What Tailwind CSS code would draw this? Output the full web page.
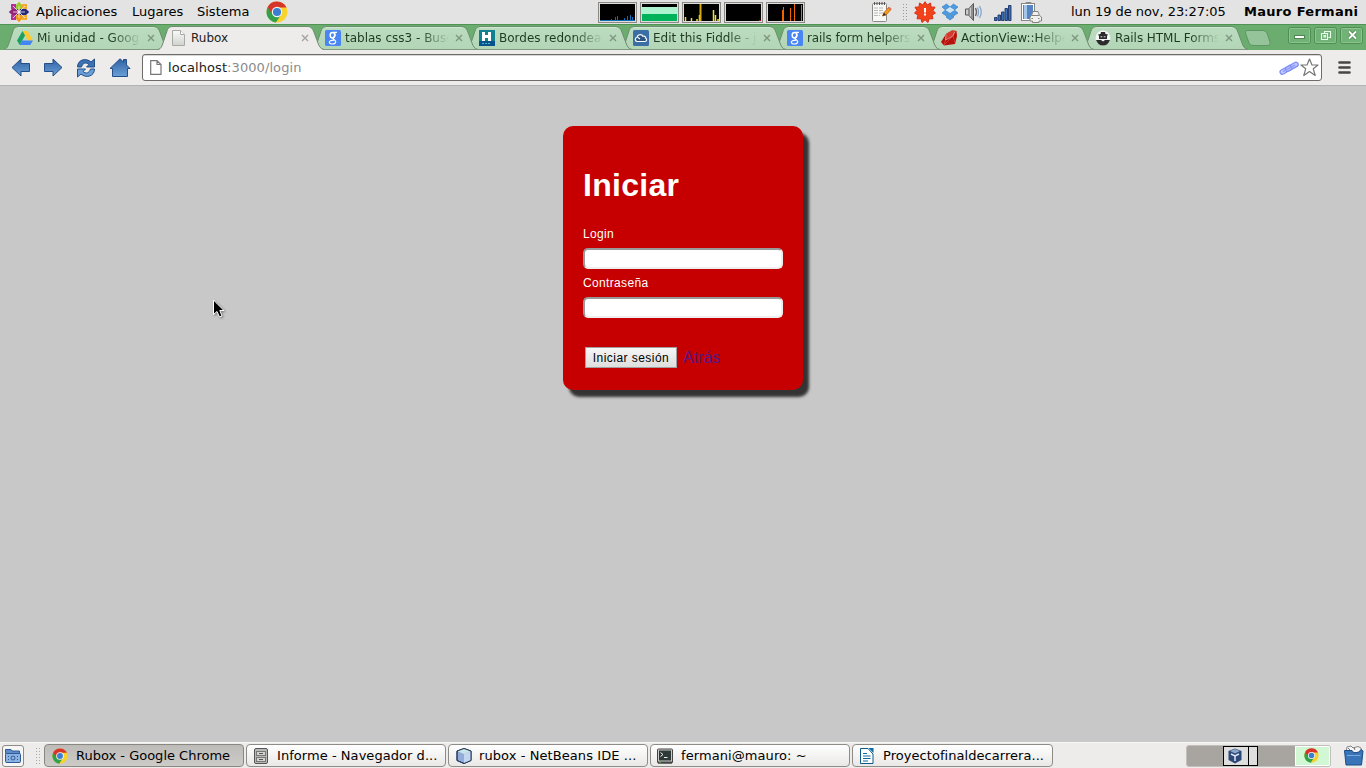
<!DOCTYPE html>
<html lang="es">
<head>
<meta charset="utf-8">
<title>Rubox</title>
<script src="https://cdn.jsdelivr.net/npm/@tailwindcss/browser@4"></script>
</head>
<body class="w-[1366px] h-[768px] overflow-hidden flex flex-col bg-[#c8c8c8] font-['DejaVu_Sans',sans-serif] text-black">
<svg class="absolute w-0 h-0">
  <defs>
    <linearGradient id="blue" x1="0" y1="0" x2="0" y2="1"><stop offset="0" stop-color="#2f62a3"/><stop offset="1" stop-color="#6b9fd8"/></linearGradient>
    <linearGradient id="tabg" x1="0" y1="0" x2="0" y2="1"><stop offset="0" stop-color="#bcdcbf"/><stop offset="1" stop-color="#b3d6b7"/></linearGradient>
    <linearGradient id="paper" x1="0" y1="0" x2="0" y2="1"><stop offset="0" stop-color="#fafaf8"/><stop offset="1" stop-color="#d0d3cd"/></linearGradient>
  </defs>
  <symbol id="tab" viewBox="0 0 166 25"><path d="M0 24.5C3 24 4 21 5 18L9 6C10 2.500 12 1.500 15 1.500H149C152 1.500 154 2.500 155.500 6L160 18C161 21 162.500 24 166 24.500Z" fill="url(#tabg)"/><path d="M0 24.500C3 24 4 21 5 18L9 6C10 2.500 12 1.500 15 1.500H149C152 1.500 154 2.500 155.500 6L160 18C161 21 162.500 24 166 24.500" fill="none" stroke="#6c8e6e"/><path d="M14 2.500H150" stroke="#cfe8d1"/><path d="M2 24.500H165" stroke="#7f9a81"/></symbol>
  <symbol id="x" viewBox="0 0 8 8"><path d="M1 1L7 7M7 1L1 7" stroke="currentColor" stroke-width="1.400"/></symbol>
  <symbol id="chrome" viewBox="0 0 20 20"><circle cx="10" cy="10" r="9.500" fill="#f8d32c"/><path d="M10 10L1.500 5.500A9.700 9.700 0 0 0 9 19.600L14 12Z" fill="#35a04a"/><path d="M10 10L5.500 12L1.500 5.400A9.700 9.700 0 0 1 18.700 6H10Z" fill="#d8352a"/><circle cx="10" cy="10" r="4.800" fill="#f4f4f0"/><circle cx="10" cy="10" r="3.700" fill="#3c7fd0"/></symbol>
  <symbol id="g" viewBox="0 0 16 16"><rect width="16" height="16" rx="1.500" fill="#4a86f3"/><ellipse cx="7.500" cy="5.300" rx="2.300" ry="2.700" fill="none" stroke="#fff" stroke-width="1.500"/><path d="M8 2.300H12M9.500 3C10.500 5 10 6.500 8.300 7.800C7 9 9 9.300 10 10.300C12 12.500 9.500 14 7.300 14C4 14 3.500 11.800 5.500 10.800C6.500 10.300 8 10.200 9 10.200" fill="none" stroke="#fff" stroke-width="1.200"/></symbol>
</svg>

<!-- GNOME top panel -->
<header class="h-6 shrink-0 flex items-center bg-[#e3e3e3] text-[13px] leading-[22px] pb-px">
  <svg class="ml-2 w-[22px] h-[22px] shrink-0" viewBox="0 0 22 22">
    <path d="M11 .8L14 4V10L11 11L8 10V4Z" fill="#9ccd2a"/><path d="M11 21.200L14 18V12L11 11L8 12V18Z" fill="#f09a1a"/><path d="M.8 11L4 8H10L11 11L10 14H4Z" fill="#932279"/><path d="M21.200 11L18 8H12L11 11L12 14H18Z" fill="#27277c"/>
    <path d="M3 3H8V8H3Z" fill="#b2309a"/><path d="M19 3V8H14V3Z" fill="#f5ac2e"/><path d="M3 19V14H8V19Z" fill="#b2309a"/><path d="M19 19H14V14H19Z" fill="#f5ac2e"/>
    <path d="M5 5L17 17M17 5L5 17M11 5V17M5 11H17" stroke="#eee" stroke-width=".8"/><circle cx="11" cy="11" r="1.500" fill="#eee"/>
  </svg>
  <span class="ml-1.5 w-24">Aplicaciones</span><span class="w-[65px]">Lugares</span><span class="w-[69px]">Sistema</span>
  <svg class="w-[22px] h-[22px] shrink-0 mt-px"><use href="#chrome"/></svg>
  <div class="ml-[310px] mt-px flex gap-[3px]">
    <svg class="w-[39px] h-[21px] border border-[#8c8884] bg-black" viewBox="0 0 37 19"><path d="M1 17.500H36M12.500 16V18M16.500 14V18M18.500 13V18M25.500 15V18M28.500 13V18M31.500 12V18M33.500 14V18" stroke="#0a6fb8"/><rect x=".5" y=".5" width="36" height="18" fill="none" stroke="#ddd"/></svg>
    <svg class="w-[39px] h-[21px] border border-[#8c8884] bg-black" viewBox="0 0 37 19"><path d="M1 4H36V11H1Z" fill="#aef3cf"/><path d="M1 11H36V18H1Z" fill="#00b25a"/><rect x=".5" y=".5" width="36" height="18" fill="none" stroke="#ddd"/></svg>
    <svg class="w-[39px] h-[21px] border border-[#8c8884] bg-black" viewBox="0 0 37 19"><path d="M2.500 14V18M8.500 15V18M14 16V18M16.500 12V18M30.500 7V18M32.500 12V18M35 16V18" stroke="#f3df45" stroke-width="1.500"/><path d="M17.500 1V18" stroke="#d5ad00" stroke-width="2"/><rect x=".5" y=".5" width="36" height="18" fill="none" stroke="#ddd"/></svg>
    <svg class="w-[39px] h-[21px] border border-[#8c8884] bg-black" viewBox="0 0 37 19"><path d="M34 17.500H36" stroke="#d00"/><rect x=".5" y=".5" width="36" height="18" fill="none" stroke="#ddd"/></svg>
    <svg class="w-[39px] h-[21px] border border-[#8c8884] bg-black" viewBox="0 0 37 19"><path d="M15.500 7V18M16.500 4V18M23.500 5V18M27.500 1V18M34.500 2V18" stroke="#f26400"/><rect x=".5" y=".5" width="36" height="18" fill="none" stroke="#ddd"/></svg>
  </div>
  <svg class="ml-[64px] w-6 h-[22px] shrink-0" viewBox="0 0 24 22"><rect x="3.500" y="2.500" width="14" height="18" rx="1" fill="#f7f7f5" stroke="#8a8a86"/><path d="M5.500 1V4M8 1V4M10.500 1V4M13 1V4M15.500 1V4" stroke="#555"/><path d="M5 7H15M5 9.500H14M5 12H15M5 14.500H11" stroke="#b8b8b8" stroke-dasharray="4 1"/><path d="M13.500 15L15 11.500L19.500 6.500L22 8.500L17 14Z" fill="#f69a1d" stroke="#b75b00" stroke-width=".7"/><path d="M13.500 15L15 11.500L17 14Z" fill="#333"/><path d="M19.500 6.500L22 8.500" stroke="#e26b5e" stroke-width="2"/></svg>
  <svg class="ml-[10px] w-[6px] h-4 shrink-0" viewBox="0 0 6 16"><path d="M.5 0V16M3.500 0V16" stroke="#999" stroke-dasharray="1 2"/></svg>
  <svg class="ml-[5px] w-[22px] h-[22px] shrink-0" viewBox="0 0 22 22"><path d="M11 .7L13.200 4L16.500 2L17 6L21 6.200L18.900 9.500L21.500 12L18 14L19 17.800L15 17.800L14 21.500L11 18.800L8 21.500L7 17.800H3L4 14L.5 12L3.100 9.500L1 6.200L5 6L5.500 2L8.800 4Z" fill="#f2421c" stroke="#d62e12"/><path d="M11 7V11.500M11 12.500V14.500" stroke="#fff" stroke-width="2"/></svg>
  <svg class="ml-[5px] w-[18px] h-[18px] shrink-0" viewBox="0 0 18 18"><path d="M5.500 1L9 4L4.500 7L1 4ZM12.500 1L17 4L13.500 7L9 4ZM4.500 7L9 10L5.500 13L1 10ZM13.500 7L17 10L12.500 13L9 10ZM5 14L9 11L13 14L9 17Z" fill="#4e9bdf" stroke="#2d78bd" stroke-width=".6"/><path d="M9 4L13.500 7L9 10L4.500 7Z" fill="#cfe4f5"/></svg>
  <svg class="ml-[5px] w-5 h-5 shrink-0" viewBox="0 0 20 20"><path d="M1.500 7H4.500L9.500 1.500V18.500L4.500 13H1.500Z" fill="#ccc" stroke="#555"/><path d="M5 7V13M8 3.500V16.500" stroke="#555"/><path d="M11.500 6Q13.500 10 11.500 14" stroke="#666" fill="none" stroke-width="1.300"/><path d="M13.500 5.500Q15.500 10 13.500 14.500M15.500 4Q19 10 15.500 16" stroke="#7fa2cf" fill="none" stroke-width="1.200"/></svg>
  <svg class="ml-[9px] w-[19px] h-[18px] shrink-0" viewBox="0 0 19 18"><path d="M1.500 14.500H4V17.500H1.500ZM5 12H7.500V17.500H5ZM8.500 9H11V17.500H8.500ZM12 5.500H14.500V17.500H12ZM15.500 2.500H18V17.500H15.500Z" fill="#3d70b8" stroke="#1c3465" stroke-width=".9"/></svg>
  <svg class="ml-[8px] w-[22px] h-[22px] shrink-0" viewBox="0 0 22 22"><path d="M6 3V1.500H11V3" fill="#ddd" stroke="#888"/><rect x="1.500" y="2.500" width="13" height="17" fill="#fff" stroke="#888"/><rect x="3" y="4" width="10" height="14" fill="#5484c2"/><path d="M5.500 4V18" stroke="#a6c5eb" stroke-width="3"/><path d="M11.500 14.500L13 10.500H18L19.500 14.500L21.500 16V20H19V21.500H12.500V20H10V16Z" fill="#f1f1ef" stroke="#84847f"/><path d="M12 14.500H19M11.500 17.500H13M18 17.500H19.500" stroke="#84847f"/></svg>
  <span class="ml-[29px] w-[173px] whitespace-nowrap tracking-[-0.05px]">lun 19 de nov, 23:27:05</span>
  <span class="font-bold whitespace-nowrap tracking-[0.3px]">Mauro Fermani</span>
</header>

<!-- Browser tab strip -->
<div class="h-[26px] shrink-0 flex bg-[#6aad6f] border-t border-[#4f9455] pl-1 text-[12px] leading-[23px] text-[#1f3a22] relative">
  <div class="relative z-[8] w-[154px] h-[25px] flex items-center shrink-0"><svg class="absolute left-0 top-0 w-[166px] h-[25px]"><use href="#tab"/></svg>
    <svg class="relative ml-[13px] w-4 h-4 shrink-0" viewBox="0 0 16 16"><path d="M5.500 1H10.500L16 10.500H11Z" fill="#fdc92c"/><path d="M5.500 1L8 5.500L2.700 15L0 10.500Z" fill="#1aa260"/><path d="M5.200 10.500H16L13.300 15H2.700Z" fill="#4285f4"/></svg>
    <span class="relative mt-[2px] ml-1 w-[104px] whitespace-nowrap [mask-image:linear-gradient(to_right,black_72%,transparent)]">Mi unidad - Goog</span><svg class="relative ml-[6px] w-2 h-2 shrink-0 text-[#7d967f]"><use href="#x"/></svg></div>
  <div class="relative z-[20] w-[154px] h-[25px] flex items-center shrink-0 text-[#222]"><svg class="absolute left-0 top-0 w-[166px] h-[25px]" viewBox="0 0 166 25"><path d="M0 25C3 24 4 21 5 18L9 6C10 2.500 12 1.500 15 1.500H149C152 1.500 154 2.500 155.500 6L160 18C161 21 162.500 24 166 25Z" fill="#edeceb"/><path d="M0 24.500C3 24 4 21 5 18L9 6C10 2.500 12 1.500 15 1.500H149C152 1.500 154 2.500 155.500 6L160 18C161 21 162.500 24 166 24.500" fill="none" stroke="#718b72"/></svg>
    <svg class="relative ml-[13px] w-4 h-4 shrink-0" viewBox="0 0 16 16"><path d="M1.500 .5H9.500L13.500 4.500V15.500H1.500Z" fill="url(#paper)" stroke="#a8aaa6"/><path d="M9.500 .5V4.500H13.500" fill="#fff" stroke="#a8aaa6"/></svg>
    <span class="relative mt-[2px] ml-1 w-[104px]">Rubox</span><svg class="relative ml-[6px] w-2 h-2 shrink-0 text-[#a3a3a1]"><use href="#x"/></svg></div>
  <div class="relative z-[7] w-[154px] h-[25px] flex items-center shrink-0"><svg class="absolute left-0 top-0 w-[166px] h-[25px]"><use href="#tab"/></svg>
    <svg class="relative ml-[13px] w-4 h-4 shrink-0"><use href="#g"/></svg>
    <span class="relative mt-[2px] ml-1 w-[104px] whitespace-nowrap [mask-image:linear-gradient(to_right,black_72%,transparent)]">tablas css3 - Busc</span><svg class="relative ml-[6px] w-2 h-2 shrink-0 text-[#7d967f]"><use href="#x"/></svg></div>
  <div class="relative z-[6] w-[154px] h-[25px] flex items-center shrink-0"><svg class="absolute left-0 top-0 w-[166px] h-[25px]"><use href="#tab"/></svg>
    <svg class="relative ml-[13px] w-4 h-4 shrink-0" viewBox="0 0 16 16"><rect width="16" height="16" fill="#12808f"/><rect y="11" width="16" height="5" fill="#07538d"/><path d="M4.500 2V11M10.500 2V11M4.500 6.500H10.500" stroke="#fff" stroke-width="3"/><path d="M3 13.500H12" stroke="#50b3c0" stroke-dasharray="2 1"/></svg>
    <span class="relative mt-[2px] ml-1 w-[104px] whitespace-nowrap [mask-image:linear-gradient(to_right,black_72%,transparent)]">Bordes redondea</span><svg class="relative ml-[6px] w-2 h-2 shrink-0 text-[#7d967f]"><use href="#x"/></svg></div>
  <div class="relative z-[5] w-[154px] h-[25px] flex items-center shrink-0"><svg class="absolute left-0 top-0 w-[166px] h-[25px]"><use href="#tab"/></svg>
    <svg class="relative ml-[13px] w-4 h-4 shrink-0" viewBox="0 0 16 16"><rect width="16" height="16" rx="1.500" fill="#3a6ea5"/><path d="M4 11.500C1.500 11 2 7.500 4 7.500C4.500 4 9 4 9.800 6.300C12 5.500 13 7.500 12.500 8C14.500 9 13.500 11.500 12 11.500ZM5 7.500L7 9" fill="#295485" stroke="#fff" stroke-width="1.200"/></svg>
    <span class="relative mt-[2px] ml-1 w-[104px] whitespace-nowrap [mask-image:linear-gradient(to_right,black_72%,transparent)]">Edit this Fiddle - j</span><svg class="relative ml-[6px] w-2 h-2 shrink-0 text-[#7d967f]"><use href="#x"/></svg></div>
  <div class="relative z-[4] w-[154px] h-[25px] flex items-center shrink-0"><svg class="absolute left-0 top-0 w-[166px] h-[25px]"><use href="#tab"/></svg>
    <svg class="relative ml-[13px] w-4 h-4 shrink-0"><use href="#g"/></svg>
    <span class="relative mt-[2px] ml-1 w-[104px] whitespace-nowrap tracking-[-0.1px] [mask-image:linear-gradient(to_right,black_72%,transparent)]">rails form helpers</span><svg class="relative ml-[6px] w-2 h-2 shrink-0 text-[#7d967f]"><use href="#x"/></svg></div>
  <div class="relative z-[3] w-[154px] h-[25px] flex items-center shrink-0"><svg class="absolute left-0 top-0 w-[166px] h-[25px]"><use href="#tab"/></svg>
    <svg class="relative ml-[13px] w-4 h-4 shrink-0" viewBox="0 0 16 16"><path d="M0 12L5 4L11 .5L15.500 1L16 6L14 14L3 15.500Z" fill="#b5120d"/><path d="M5 4L11 .5L15.500 1L12 6L5 9Z" fill="#d33a30"/><path d="M5 4.500L4.500 10L12 6L13.500 2" fill="none" stroke="#f2a49c" stroke-width=".8"/><path d="M4.500 10L3 15L12 6L14 13" fill="none" stroke="#d9544a" stroke-width=".6"/></svg>
    <span class="relative mt-[2px] ml-1 w-[104px] whitespace-nowrap [mask-image:linear-gradient(to_right,black_72%,transparent)]">ActionView::Helpe</span><svg class="relative ml-[6px] w-2 h-2 shrink-0 text-[#7d967f]"><use href="#x"/></svg></div>
  <div class="relative z-[2] w-[154px] h-[25px] flex items-center shrink-0"><svg class="absolute left-0 top-0 w-[166px] h-[25px]"><use href="#tab"/></svg>
    <svg class="relative ml-[13px] w-4 h-4 shrink-0" viewBox="0 0 16 16"><circle cx="8" cy="8" r="7.500" fill="#f5f5f5"/><path d="M6 2H10L10.500 4L13 4.500L12 6V9H4V6L3 4.500L5.500 4Z" fill="#2b2b2b"/><path d="M1 10H6L8 11.500L10 10H15Q13 15.500 8 15.500T1 10Z" fill="#2b2b2b"/><path d="M5.500 6.800H7.300M8.700 6.800H10.500" stroke="#ddd"/></svg>
    <span class="relative mt-[2px] ml-1 w-[104px] whitespace-nowrap tracking-[-0.05px] [mask-image:linear-gradient(to_right,black_72%,transparent)]">Rails HTML Forms</span><svg class="relative ml-[6px] w-2 h-2 shrink-0 text-[#7d967f]"><use href="#x"/></svg></div>
  <svg class="ml-[8px] mt-[5px] w-7 h-4 shrink-0" viewBox="0 0 28 16"><path d="M3 .5H19Q22 .5 23 3L26 12Q27 15.500 24 15.500H9Q6 15.500 5 13L1.500 3Q1 .5 3 .5Z" fill="#96c49a" stroke="#5d9661"/></svg>
  <div class="ml-auto mr-[3px] mt-[2px] flex gap-[3px]">
    <svg class="w-[23px] h-[17px]" viewBox="0 0 23 17"><rect x=".5" y=".5" width="22" height="16" rx="2" fill="#71b276" stroke="#4f8f54"/><rect x="1.500" y="1.500" width="20" height="14" rx="1" fill="none" stroke="#8cc390"/><rect x="6.500" y="8.500" width="10" height="3" fill="#fff" stroke="#4f8553"/></svg>
    <svg class="w-[23px] h-[17px]" viewBox="0 0 23 17"><rect x=".5" y=".5" width="22" height="16" rx="2" fill="#71b276" stroke="#4f8f54"/><rect x="1.500" y="1.500" width="20" height="14" rx="1" fill="none" stroke="#8cc390"/><path d="M10.500 6V4.500H16.500V10.500H14.500M7.500 6.500H13.500V12.500H7.500ZM10 8.500H11.500V10H10Z" fill="none" stroke="#eaffeb" stroke-width="1.100"/></svg>
    <svg class="w-[23px] h-[17px]" viewBox="0 0 23 17"><rect x=".5" y=".5" width="22" height="16" rx="2" fill="#71b276" stroke="#4f8f54"/><rect x="1.500" y="1.500" width="20" height="14" rx="1" fill="none" stroke="#8cc390"/><path d="M9 4.500L16 11.500M16 4.500L9 11.500" stroke="#4f8553" stroke-width="3.500"/><path d="M9 4.500L16 11.500M16 4.500L9 11.500" stroke="#fff" stroke-width="1.800"/></svg>
  </div>
</div>

<!-- Browser toolbar -->
<div class="h-9 shrink-0 flex items-center bg-[#edeceb] border-b border-[#b2b2b0] pl-[11px]">
  <svg class="w-5 h-5 shrink-0" viewBox="0 0 20 20"><path d="M1 9.500L10 1V5.500H18.500V13.500H10V18Z" fill="url(#blue)" stroke="#234e87"/></svg>
  <svg class="ml-3 w-5 h-5 shrink-0" viewBox="0 0 20 20"><path d="M19 9.500L10 1V5.500H1.500V13.500H10V18Z" fill="url(#blue)" stroke="#234e87"/></svg>
  <svg class="ml-[13px] w-5 h-5 shrink-0" viewBox="0 0 20 20"><path d="M1.500 9C1.500 1.500 10 -.5 15 4L18.500 1V9H10.500L13 6.500C10 4 7 4.500 5.500 9Z" fill="#3b72b5" stroke="#234e87"/><path d="M18.500 11C18.500 18.500 10 20.500 5 16L1.500 19V11H9.500L7 13.500C10 16 13 15.500 14.500 11Z" fill="#6b9fd8" stroke="#234e87"/></svg>
  <svg class="ml-[13px] w-[22px] h-5 shrink-0" viewBox="0 0 22 20"><path d="M1 10.500L11 .8L14.500 4V1.500H17.500V7L21 10.500H18.500V18.500H3.500V10.500Z" fill="url(#blue)" stroke="#234e87"/></svg>
  <div class="ml-[11px] w-[1180px] h-[27px] shrink-0 flex items-center rounded-[3px] border border-[#6e6c69] bg-white shadow-[inset_0_1px_0_#d8d8d8]">
    <svg class="ml-[7px] w-3 h-[15px]" viewBox="0 0 12 15"><path d="M.7 .7H7L11 4.500V14.300H.7ZM7 .7V4.500H11" fill="#fff" stroke="#777" stroke-width="1.200"/></svg>
    <span class="ml-[6px] text-[13px] text-[#8b8b8b] whitespace-nowrap tracking-[0.08px]"><span class="text-[#222]">localhost</span>:3000/login</span>
    <svg class="ml-auto w-5 h-4" viewBox="0 0 20 16"><g transform="rotate(-29 10 8)" fill="#c3caff" stroke="#7c8df6" stroke-width="1.300"><rect x="0" y="6" width="8" height="4.500" rx="2.200"/><rect x="6" y="6" width="8" height="4.500" rx="2.200"/><rect x="12" y="6" width="8" height="4.500" rx="2.200"/><path d="M3 8.200H17" stroke="#8e9cfa" stroke-width="1.500"/></g></svg>
    <svg class="ml-[1px] mr-[2px] w-[19px] h-[19px]" viewBox="0 0 19 19"><path d="M9.500 1L12 7H18L13.300 10.800L15.200 17.500L9.500 13.500L3.800 17.500L5.700 10.800L1 7H7Z" fill="#fff" stroke="#777" stroke-width="1.200" stroke-linejoin="round"/></svg>
  </div>
  <svg class="ml-4 w-[13px] h-[13px]" viewBox="0 0 13 13"><path d="M1.500 1.500H11.500M1.500 6.500H11.500M1.500 11.500H11.500" stroke="#454545" stroke-width="2.600" stroke-linecap="round"/></svg>
</div>

<!-- Page -->
<main class="flex-1 pt-10 relative font-['Liberation_Sans',Arial,sans-serif]">
  <form class="mx-auto w-60 h-[264px] rounded-[10px] bg-[#c60000] px-5 shadow-[6px_7px_3px_#333] text-[12px] leading-[14px] tracking-[0.35px] text-white flex flex-col items-start">
    <h1 class="mt-[41px] h-[37px] text-[32px] leading-[37px] font-bold tracking-[0.3px]">Iniciar</h1>
    <label class="mt-[23px]">Login</label>
    <input class="mt-[7px] w-[200px] h-[21px] shrink-0 rounded-[5px] border-2 border-t-[#999] border-l-[#999] border-r-[#eee] border-b-[#eee] bg-white">
    <label class="mt-[7px]">Contraseña</label>
    <input class="mt-[7px] w-[200px] h-[21px] shrink-0 rounded-[5px] border-2 border-t-[#999] border-l-[#999] border-r-[#eee] border-b-[#eee] bg-white" type="password">
    <div class="mt-[29px] ml-[2px] h-[21px] flex items-start gap-[6px]">
      <button type="button" class="w-[92px] h-[21px] border border-[#a0a0a0] bg-linear-to-b from-[#f6f6f6] to-[#dedede] text-black whitespace-nowrap tracking-[0.45px]">Iniciar sesión</button>
      <a class="text-[16px] leading-[21px] text-[#551a8b] tracking-normal">Atrás</a>
    </div>
  </form>
  <svg class="absolute left-[212px] top-[213px] w-4 h-5 drop-shadow-[1px_1px_1px_rgba(0,0,0,0.4)]" viewBox="0 0 16 20"><path d="M1.500 1V15.500L5 12.500L7.500 18L10 17L7.800 11.500H12Z" fill="#000" stroke="#fff"/></svg>
</main>

<!-- Window list -->
<footer class="h-[26px] shrink-0 flex items-center bg-[#edeceb] border-t border-[#f8f8f7] text-[13px]">
  <div class="ml-[2px] w-[22px] h-[22px] rounded-[3px] border border-[#8f8c88] bg-[#f6f6f5] flex items-center justify-center shrink-0"><svg class="w-[18px] h-4" viewBox="0 0 18 16"><path d="M1.500 3V1.500H7L8 3H15.500V14.500H2.500Z" fill="#5d8cc8" stroke="#2e5b97"/><rect x="1.500" y="5.500" width="15" height="9" rx="1" fill="#8bb2e2" stroke="#2e5b97"/><circle cx="9" cy="10" r="2" fill="none" stroke="#2e5b97"/><path d="M4.500 8V12M13.500 8V12" stroke="#2e5b97" stroke-dasharray="1 2"/></svg></div>
  <svg class="ml-[12px] w-[6px] h-4 shrink-0" viewBox="0 0 6 16"><path d="M.5 0V16M3.500 0V16" stroke="#aaa" stroke-dasharray="1 2"/></svg>
  <div class="ml-[2px] flex gap-[2px] whitespace-nowrap">
    <div class="w-[200px] h-[23px] rounded-[4px] border border-[#8a8783] bg-linear-to-b from-[#bebcb9] to-[#cdcbc8] flex items-center pl-[7px] pt-px"><svg class="w-4 h-4"><use href="#chrome"/></svg><span class="ml-2">Rubox - Google Chrome</span></div>
    <div class="w-[200px] h-[23px] rounded-[4px] border border-[#8f8c88] bg-linear-to-b from-white to-[#e9e8e6] flex items-center pl-[6px]"><svg class="w-4 h-4" viewBox="0 0 16 16"><rect x="1.500" y=".5" width="13" height="15" rx="1.500" fill="#b8b8b4" stroke="#555"/><rect x="3.500" y="3.500" width="9" height="4" fill="#d3d3d0" stroke="#777"/><rect x="3.500" y="9.500" width="9" height="4" fill="#d3d3d0" stroke="#777"/><path d="M6 5.500H10M6 11.500H10" stroke="#555"/></svg><span class="ml-2 tracking-[0.05px]">Informe - Navegador d...</span></div>
    <div class="w-[200px] h-[23px] rounded-[4px] border border-[#8f8c88] bg-linear-to-b from-white to-[#e9e8e6] flex items-center pl-[7px]"><svg class="w-4 h-4" viewBox="0 0 16 16"><path d="M8 .5L15 3V12.500L8 15.500L1 12.500V3Z" fill="#91acd8" stroke="#24375f"/><path d="M8 .5L15 3L8 6L1 3Z" fill="#c9e6e4"/><path d="M8 6L15 3V12.500L8 15.500Z" fill="#c4d6ef"/><path d="M8 .5L15 3V12.500L8 15.500L1 12.500V3Z" fill="none" stroke="#24375f"/></svg><span class="ml-[7px] tracking-[0.08px]">rubox - NetBeans IDE ...</span></div>
    <div class="w-[200px] h-[23px] rounded-[4px] border border-[#8f8c88] bg-linear-to-b from-white to-[#e9e8e6] flex items-center pl-[6px]"><svg class="w-4 h-4" viewBox="0 0 16 16"><rect x=".5" y="1" width="15" height="14" rx="1" fill="#ccc" stroke="#444"/><rect x="2" y="2.500" width="12" height="10" fill="#2e3a38"/><path d="M3.500 4.500L6 6.500L3.500 8.500M7 9.500H10.500" stroke="#eee" fill="none"/><path d="M1 14.500H15" stroke="#444" stroke-width="2"/><path d="M2 14H4" stroke="#6c3"/></svg><span class="ml-2 tracking-[0.08px]">fermani@mauro: ~</span></div>
    <div class="w-[201px] h-[23px] rounded-[4px] border border-[#8f8c88] bg-linear-to-b from-white to-[#e9e8e6] flex items-center pl-[6px]"><svg class="w-4 h-4" viewBox="0 0 16 16"><path d="M1.500 .5H9L14 6V15.500H1.500Z" fill="#fff" stroke="#0b5a8a"/><path d="M9.500 0H14.500V5Z" fill="#0b6aa0"/><path d="M4 5.500H8M4 8H11.500M4 10.500H11.500M4 13H9" stroke="#0b6aa0" stroke-width="1.200"/></svg><span class="ml-2 tracking-[0.05px]">Proyectofinaldecarrera...</span></div>
  </div>
  <div class="ml-auto w-[145px] h-[22px] rounded-[3px] bg-[#a8a5a1] border border-[#c2c0bd] flex shrink-0 overflow-hidden">
    <div class="ml-9 w-[35px] h-5 bg-[#dedede] border border-black flex shrink-0"><div class="w-[25px] border-r border-black flex justify-center items-center pr-[2px]"><svg class="w-[14px] h-4" viewBox="0 0 14 16"><path d="M7 .5L13.500 3V12L7 15.500L.5 12V3Z" fill="#2d4878"/><path d="M7 1L12 3L7 5.500L2 3Z" fill="#8ca5c9"/><path d="M3 6L7 8L11 6M7 8V13" stroke="#dce7f7" stroke-width="1.500" fill="none"/></svg></div></div>
    <div class="ml-[37px] w-[35px] h-5 bg-[#d2f7d5] border border-white flex justify-center items-center pr-[2px] shrink-0"><svg class="w-[15px] h-[15px]"><use href="#chrome"/></svg></div>
  </div>
  <svg class="ml-[12px] mr-[2px] w-[21px] h-[21px] shrink-0" viewBox="0 0 21 21"><path d="M3 7L4 2L8 1L10 3L15 1.500L18 3L18 8Z" fill="#f5f5f5" stroke="#888"/><path d="M5 3L7 5M11 2L12 5" stroke="#777"/><path d="M1.500 5.500H9L11 8L16 7L18 4.500L20 6L18.500 20H3Z" fill="#3974b8" stroke="#1c4c86"/><path d="M4 10.500H17.500" stroke="#78a8dc"/></svg>
</footer>
</body>
</html>
